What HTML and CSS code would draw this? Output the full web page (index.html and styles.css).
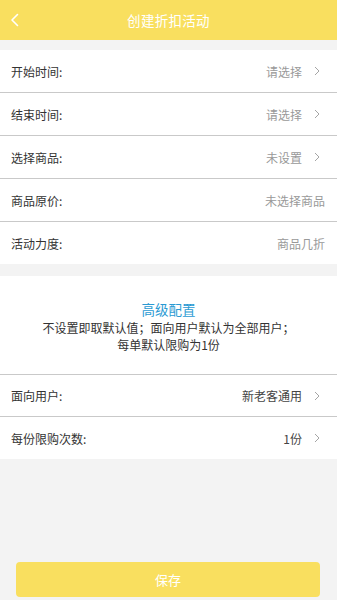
FILE: index.html
```html
<!DOCTYPE html>
<html lang="zh">
<head>
<meta charset="utf-8">
<link rel="stylesheet" href="styles.css">
</head>
<body>
<div class="page">
  <header class="topbar">
    <span class="back"><svg width="9" height="14" viewBox="0 0 9 14"><path d="M7.5 1.5 L2 7 L7.5 12.5" fill="none" stroke="#fff" stroke-width="1.6" stroke-linecap="round" stroke-linejoin="round"/></svg></span>
    <h1 class="title">创建折扣活动</h1>
  </header>

  <section class="group first">
    <div class="row"><span class="label">开始时间:</span><span class="value">请选择<svg class="chev" width="6" height="10" viewBox="0 0 6 10"><path d="M1 1 L5 5 L1 9" fill="none" stroke="#a5a5a5" stroke-width="1"/></svg></span></div>
    <div class="row"><span class="label">结束时间:</span><span class="value">请选择<svg class="chev" width="6" height="10" viewBox="0 0 6 10"><path d="M1 1 L5 5 L1 9" fill="none" stroke="#a5a5a5" stroke-width="1"/></svg></span></div>
    <div class="row"><span class="label">选择商品:</span><span class="value">未设置<svg class="chev" width="6" height="10" viewBox="0 0 6 10"><path d="M1 1 L5 5 L1 9" fill="none" stroke="#a5a5a5" stroke-width="1"/></svg></span></div>
    <div class="row"><span class="label">商品原价:</span><span class="value">未选择商品</span></div>
    <div class="row last"><span class="label">活动力度:</span><span class="value">商品几折</span></div>
  </section>

  <section class="group adv">
    <div class="adv-head">
      <div class="adv-title">高级配置</div>
      <div class="adv-desc">不设置即取默认值；面向用户默认为全部用户；<br>每单默认限购为1份</div>
    </div>
    <div class="row topline"><span class="label">面向用户:</span><span class="value dark">新老客通用<svg class="chev" width="6" height="10" viewBox="0 0 6 10"><path d="M1 1 L5 5 L1 9" fill="none" stroke="#a5a5a5" stroke-width="1"/></svg></span></div>
    <div class="row last"><span class="label">每份限购次数:</span><span class="value dark">1份<svg class="chev" width="6" height="10" viewBox="0 0 6 10"><path d="M1 1 L5 5 L1 9" fill="none" stroke="#a5a5a5" stroke-width="1"/></svg></span></div>
  </section>

  <div class="spacer"></div>
  <div class="footer">
    <button class="save">保存</button>
  </div>
</div>
</body>
</html>
```
FILE: styles.css
```css
* { box-sizing: border-box; margin: 0; padding: 0; }
html, body { height: 100%; }
body {
  background: #f3f3f3;
  font-family: "Noto Sans CJK SC", "Noto Sans", sans-serif;
  color: #333;
}
.page {
  display: flex;
  flex-direction: column;
  min-height: 600px;
}
.topbar {
  height: 40px;
  background: #f9df5f;
  display: flex;
  align-items: center;
  justify-content: center;
  position: relative;
}
.back {
  position: absolute;
  left: 10px;
  top: 13px;
  display: flex;
}
.title {
  font-size: 13.5px;
  font-weight: normal;
  color: #fff;
  letter-spacing: 0.3px;
}
.group {
  background: #fff;
}
.group.first { margin-top: 10px; }
.group.adv { margin-top: 12px; }
.row {
  height: 43px;
  display: flex;
  align-items: center;
  justify-content: space-between;
  padding: 0 12px 0 11px;
  border-bottom: 1px solid #c9c9c9;
  font-size: 12px;
}
.row.last { border-bottom: none; height: 42px; }
.row.topline { border-top: 1px solid #c9c9c9; }
.label { color: #333; }
.value {
  color: #999;
  display: flex;
  align-items: center;
}
.value.dark { color: #444; }
.chev {
  margin-left: 12px;
  margin-right: 5px;
}
.adv-head {
  height: 98px;
  display: flex;
  flex-direction: column;
  align-items: center;
  justify-content: center;
  text-align: center;
  padding-top: 4px;
}
.adv-title {
  color: #2a9ad3;
  font-size: 13.5px;
  line-height: 17px;
  margin-bottom: 1px;
}
.adv-desc {
  font-size: 12px;
  line-height: 17px;
  color: #333;
}
.spacer { flex: 1; }
.footer {
  padding: 0 17px 3px 16px;
}
.save {
  width: 100%;
  height: 35px;
  border: none;
  border-radius: 4px;
  background: #f9df5f;
  color: #fff;
  font-family: "Noto Sans CJK SC", sans-serif;
  font-size: 13px;
}
```
